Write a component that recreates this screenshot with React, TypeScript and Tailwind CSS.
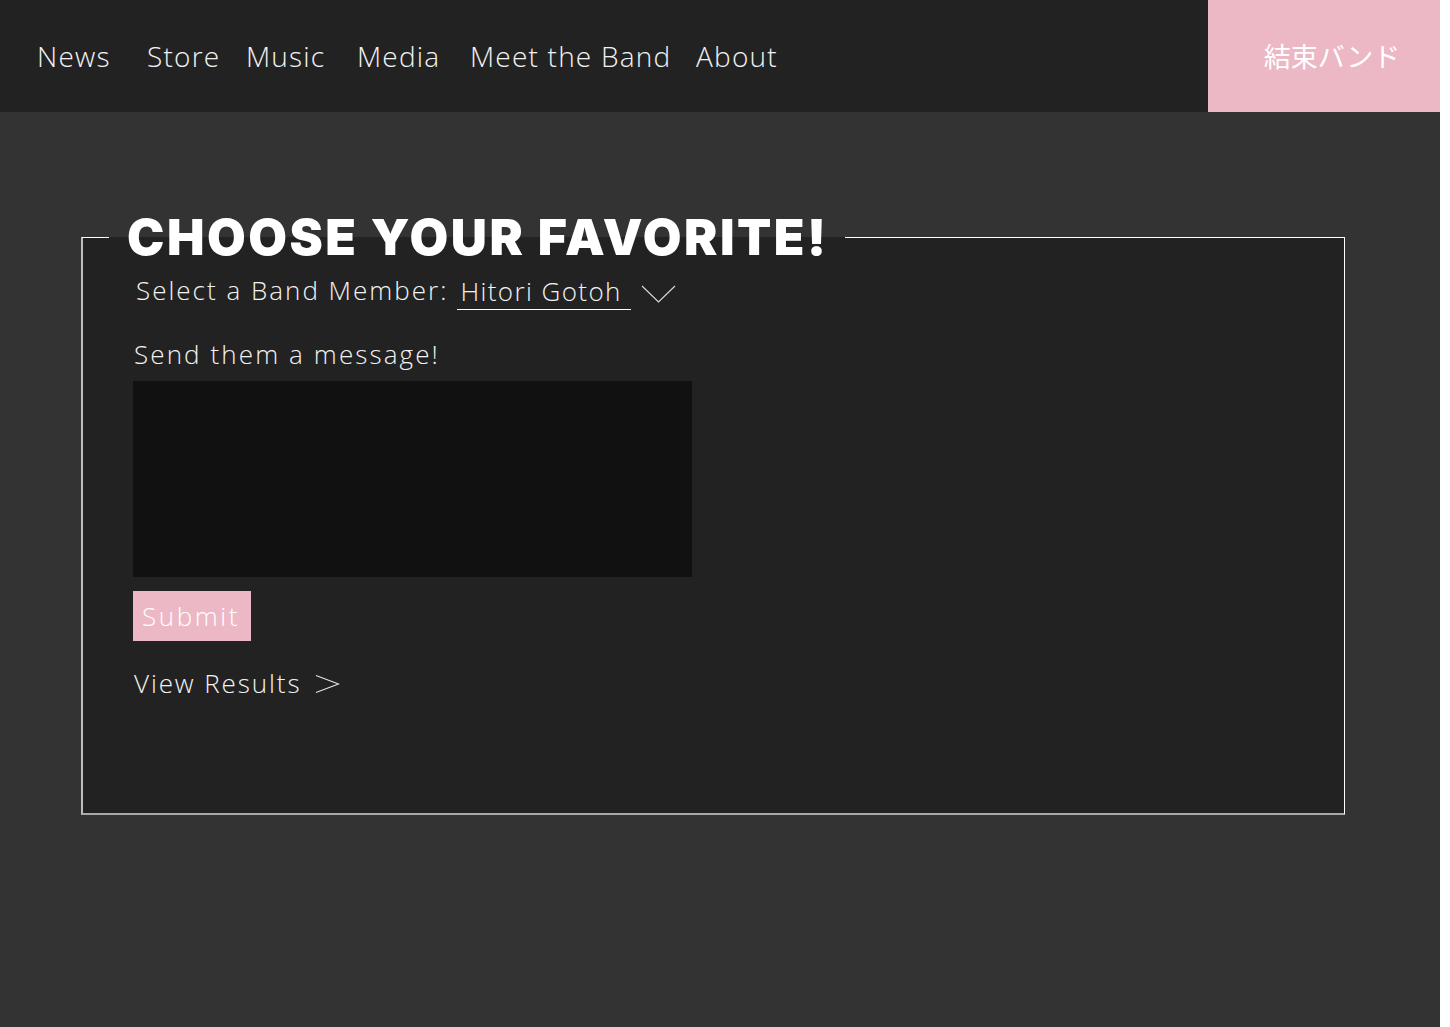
import React, { useState } from 'react';

const members = ['Hitori Gotoh', 'Nijika Ijichi', 'Ryo Yamada', 'Ikuyo Kita'];

const navItems = [
  { label: 'News', width: 'w-[110px]' },
  { label: 'Store', width: 'w-[99px]' },
  { label: 'Music', width: 'w-[111px]' },
  { label: 'Media', width: 'w-[113px]' },
  { label: 'Meet the Band', width: 'w-[226px]' },
  { label: 'About', width: 'w-auto' },
];

function Chevron() {
  return (
    <svg width="36" height="20" viewBox="0 0 36 20" fill="none" className="ml-[10px] mt-[12px]">
      <path d="M1 2 L17.5 18 L34 2" stroke="#d8d8d8" strokeWidth="1.2" />
    </svg>
  );
}

function ArrowRight() {
  return (
    <svg width="25" height="20" viewBox="0 0 25 20" fill="none" className="ml-[14px] mt-[2px]">
      <path d="M1 1.5 L23.5 10 L1 18.5" stroke="#e6e6e6" strokeWidth="1.2" />
    </svg>
  );
}

export default function App() {
  const [member, setMember] = useState(members[0]);
  const [message, setMessage] = useState('');

  return (
    <div className="flex min-h-screen w-full bg-white font-['Open_Sans',sans-serif] font-light text-[#f2f2f2]">
      <div className="w-[1440px] min-h-[1027px] bg-[#333333]">
        <header className="flex h-[112px] bg-[#222222]">
          <nav className="flex flex-1 items-center pl-[37px]">
            {navItems.map((item) => (
              <a key={item.label} href="#" className={`${item.width} text-[28px] tracking-[1.2px] whitespace-nowrap`}>
                {item.label}
              </a>
            ))}
          </nav>
          <div className="flex w-[232px] items-center justify-center bg-[#edb8c5] pl-[16px] font-['Noto_Sans_CJK_JP',sans-serif] text-[27px] font-normal text-white">
            結束バンド
          </div>
        </header>

        <main className="pt-[100px]">
          <fieldset className="ml-[81px] w-[1264px] border-t border-r border-l-2 border-b-2 border-t-white border-r-white border-l-[#bdbdbd] border-b-[#a8a8a8] bg-[#222222] pl-[50px] pr-6 pb-[112px]">
            <legend className="ml-[-24px] pl-[18px] pr-[17px] font-['Inter',sans-serif] text-[50px] leading-[50px] font-black tracking-[2.5px] text-white uppercase">
              Choose your favorite!
            </legend>

            <div className="mt-[10px] flex h-[38px] items-start">
              <label htmlFor="member" className="ml-[3px] mr-[9px] text-[26px] leading-[36px] tracking-[2px]">
                Select a Band Member:
              </label>
              <select
                id="member"
                value={member}
                onChange={(e) => setMember(e.target.value)}
                className="h-[38px] w-[174px] appearance-none border-b border-white bg-transparent pl-[3px] text-[26px] leading-[36px] tracking-[1.4px] text-[#f2f2f2] outline-none"
              >
                {members.map((m) => (
                  <option key={m} value={m} className="bg-[#222222]">
                    {m}
                  </option>
                ))}
              </select>
              <Chevron />
            </div>

            <p className="mt-[26px] ml-[1px] text-[26px] leading-[36px] tracking-[2.1px]">Send them a message!</p>
            <textarea
              value={message}
              onChange={(e) => setMessage(e.target.value)}
              className="mt-[9px] block h-[196px] w-[559px] resize-none bg-[#111111] p-2 text-lg text-white outline-none"
            />

            <button
              type="button"
              className="mt-[14px] block h-[50px] w-[118px] bg-[#edb8c5] pr-[2px] text-[26px] tracking-[2.6px] text-white"
            >
              Submit
            </button>

            <a href="#" className="mt-[24px] ml-[1px] flex h-[36px] items-center text-[26px] tracking-[1.9px]">
              View Results
              <ArrowRight />
            </a>
          </fieldset>
        </main>
      </div>
    </div>
  );
}
